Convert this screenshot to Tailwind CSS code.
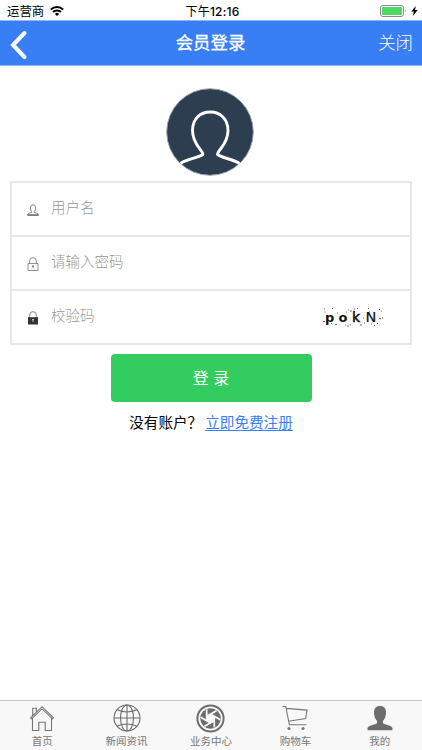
<!DOCTYPE html>
<html lang="zh-CN">
<head>
<meta charset="utf-8">
<meta name="viewport" content="width=device-width, initial-scale=1">
<title>会员登录</title>
<script src="https://cdn.jsdelivr.net/npm/@tailwindcss/browser@4"></script>
</head>
<body class="bg-white">
<div class="w-[422px] h-[750px] flex flex-col overflow-hidden bg-white font-['Inter','Noto_Sans_CJK_SC',sans-serif] text-black">
  <!-- status bar -->
  <div class="h-[20px] shrink-0 grid grid-cols-3 items-center pl-[7px] pr-[4px] text-[12px] leading-[20px]">
    <div class="flex items-center gap-[6px] pt-[2px]">
      <span class="text-[12.400px]">运营商</span>
      <svg class="w-[14px] h-[10px] -mt-[2px]" viewBox="0 0 14 10" fill="none" stroke="#000" stroke-width="2"><path d="M.8 3.600a9 9 0 0 1 12.400 0M3.100 6a5.600 5.600 0 0 1 7.800 0"/><path d="M7 10L4.900 7.900a3 3 0 0 1 4.200 0z" fill="#000" stroke="none"/></svg>
    </div>
    <div class="text-center font-medium pt-[2px] whitespace-nowrap tracking-[.2px]"><span class="font-normal">下午</span>12:16</div>
    <div class="flex justify-end items-center gap-[4px]">
      <svg class="w-[27px] h-[12px]" viewBox="0 0 27 12"><rect x=".5" y=".5" width="23" height="11" rx="2.500" fill="#fff" stroke="#8b8b8b"/><rect x="2" y="2" width="20" height="8" rx="1" fill="#4cd964"/><path d="M25 4q1.600 2 0 4z" fill="#8b8b8b"/></svg>
      <svg class="w-[7px] h-[10px]" viewBox="0 0 7 10"><path d="M4.800 0L.3 5.600h2.500L1.800 10l4.900-5.900H4z"/></svg>
    </div>
  </div>
  <!-- title bar -->
  <header class="h-[46px] shrink-0 bg-[#387ef5] border-y border-[#8fb9fb] grid grid-cols-3 items-center text-white">
    <svg class="w-[18px] h-[30px] ml-[10px] mt-[3px]" viewBox="0 0 18 30" fill="none" stroke="#fff" stroke-width="4" stroke-linecap="round"><path d="M14.500 3L3 15l11.500 12"/></svg>
    <h1 class="text-center text-[17.400px] font-normal leading-[24px] pr-[1px] [-webkit-text-stroke:.3px_white]">会员登录</h1>
    <a class="text-right text-[17.400px] font-light leading-[24px] pr-[9px]">关闭</a>
  </header>
  <!-- login form -->
  <main class="flex-1 flex flex-col items-center pt-[22px]">
    <svg class="w-[88px] h-[88px] shrink-0 mr-[2px]" viewBox="0 0 88 88"><circle cx="44" cy="44" r="43.300" fill="#2d3e50" stroke="#9aa4ae" stroke-width="1"/><path d="M14.500 75.500C22 70.500 31 70.500 36.800 66.500C37.500 62.500 26.500 57 26.500 42.500C26.500 31 34 24 44.200 24S62 31 62 42.500C62 57 51 62.500 51.500 66.500C57 70.500 66 70.500 73.500 75.500" fill="none" stroke="#fff" stroke-width="2.900" stroke-linejoin="round"/></svg>
    <form class="mt-[5px] w-[402px] h-[164px] shrink-0 border-2 border-[#e7e7e7] flex flex-col text-[14.500px] font-light text-[#999]">
      <label class="h-[54px] border-b-2 border-[#e7e7e7] flex items-center pl-[15px] pb-[2px] gap-[12px]">
        <svg class="w-[12px] h-[12px] mt-[3px]" viewBox="0 0 12 12" fill="none" stroke="#777" stroke-width=".9"><path d="M4.600 7.400C3.800 6.600 3.400 5.400 3.400 4C3.400 1.900 4.300.8 6 .8s2.600 1.100 2.600 3.200c0 1.400-.4 2.600-1.200 3.400v1.100c1.800.5 3.800.7 4 2.500H.6c.2-1.800 2.200-2 4-2.500z"/><path d="M.4 11.100h11.200" stroke="#444"/></svg>
        <span>用户名</span>
      </label>
      <label class="h-[54px] border-b-2 border-[#e7e7e7] flex items-center pl-[15px] pb-[2px] gap-[12px]">
        <svg class="w-[12px] h-[14px] mt-[3px]" viewBox="0 0 12 14" fill="none" stroke="#858585" stroke-width=".9"><path d="M1 6.500h10v7H1zM2.700 6.500V4a3.300 3.300 0 0 1 6.600 0v2.500"/><path d="M5 8.500h2L6 11.500z" fill="#555" stroke="none"/></svg>
        <span>请输入密码</span>
      </label>
      <label class="h-[52px] flex items-center pl-[15px] pb-[2px] gap-[12px]">
        <svg class="w-[12px] h-[14px] mt-[4px]" viewBox="0 0 12 14"><path d="M2.700 7V4a3.300 3.300 0 0 1 6.600 0v3" fill="none" stroke="#777" stroke-width=".9"/><path d="M1 6.200h10v7.300H1z" fill="#333"/><path d="M5 8h2l-.6 1.500v1.500h-.8V9.500z" fill="#ddd"/></svg>
        <span>校验码</span>
        <svg class="ml-auto mr-[24px] mt-[2px] w-[64px] h-[24px]" viewBox="0 0 64 24" fill="#111">
          <g class="font-['DejaVu_Sans'] font-bold text-[13px]"><text x="3" y="17">p</text><text x="16.500" y="17">o</text><text x="30" y="17" class="font-normal text-[14px]" stroke="#111" stroke-width=".5">k</text><text x="43.500" y="17" class="font-normal text-[14.500px]" stroke="#111" stroke-width=".2">N</text></g>
          <path d="M2 4h1M10 3.500h1M2.500 7h1M1 16.500h2M9 18.500h1M13 19.500h2M15 8h1M24 7h1M26 5h1M28 6h2M32 4h1M35 3.500h1M23 20h1M25 21h2M28 20h1M38 20h2M46 3.500h1M47 7h1M57 4.500h1M59 6h1M49 19h1M52 20.500h1M55 18.500h1M57 13.500h2M60 13h1M41 13h1M42 18h1" stroke="#333" stroke-width="1" opacity=".7"/>
        </svg>
      </label>
    </form>
    <button type="button" class="mt-[9px] w-[201px] h-[48px] shrink-0 rounded-[4px] bg-[#33cd5f] text-white text-[16px] leading-[48px]">登 录</button>
    <p class="mt-[10px] flex gap-[3px] text-[14.600px] leading-[22px] whitespace-nowrap"><span>没有账户？</span><a class="text-[#387ef5] underline underline-offset-2 decoration-1">立即免费注册</a></p>
  </main>
  <!-- tab bar -->
  <nav class="h-[50px] shrink-0 bg-[#f8f8f8] border-t border-[#c4c4c4] grid grid-cols-5 text-[10.500px] leading-[14px] text-[#777]">
    <a class="flex flex-col items-center pt-[3px] gap-[3px]">
      <svg class="w-[28px] h-[28px]" viewBox="0 0 28 28" fill="none" stroke="#777" stroke-width="1.100"><path d="M2.500 13.800L14 2.700l11.500 11.100-1 1L14 4.900 3.500 14.800zM4.500 14v12.500h6.300v-8.300h6.400v8.300h6.300V14M4.700 11.500V4.300h3.600v3.800"/></svg>
      <span>首页</span>
    </a>
    <a class="flex flex-col items-center pt-[3px] gap-[3px]">
      <svg class="w-[28px] h-[28px]" viewBox="0 0 28 28" fill="none" stroke="#6d6d6d" stroke-width="1.100"><circle cx="14" cy="14" r="13"/><ellipse cx="14" cy="14" rx="6.500" ry="13"/><path d="M14 1v26M1 14h26M4 5.800q10 4.400 20 0M4 22.200q10-4.400 20 0"/></svg>
      <span>新闻资讯</span>
    </a>
    <a class="flex flex-col items-center pt-[3px] gap-[2px]">
      <svg class="w-[29px] h-[29px]" viewBox="-14.500 -14.500 29 29">
        <circle r="13.100" fill="none" stroke="#6d6d6d" stroke-width="2"/><circle r="10.300" fill="#6d6d6d"/>
        <path d="M0-4.400l3.810 2.200v4.400L0 4.400l-3.810-2.200v-4.400z" fill="#f8f8f8"/>
        <g stroke="#f8f8f8" stroke-width="1.700"><path id="slit" d="M0-4.400L9.800 1.260"/><use href="#slit" transform="rotate(60)"/><use href="#slit" transform="rotate(120)"/><use href="#slit" transform="rotate(180)"/><use href="#slit" transform="rotate(240)"/><use href="#slit" transform="rotate(300)"/></g>
      </svg>
      <span>业务中心</span>
    </a>
    <a class="flex flex-col items-center pt-[3px] gap-[3px]">
      <svg class="w-[28px] h-[28px]" viewBox="0 0 28 28" fill="none" stroke="#777" stroke-width="1.100"><path d="M1.500 2.500h3.200l3.700 18.300h17M5.200 4.400L26 6.100l-1.300 8.400L7.300 17.200"/><circle cx="8" cy="24.500" r="1.600" fill="#777" stroke="none"/><circle cx="22" cy="24.500" r="1.600" fill="#777" stroke="none"/></svg>
      <span>购物车</span>
    </a>
    <a class="flex flex-col items-center pt-[3px] gap-[3px]">
      <svg class="w-[28px] h-[28px]" viewBox="0 0 28 28" fill="#6d6d6d"><path d="M14 2c4 0 6 2.300 6 6.300 0 3.700-1.100 6.600-3 8.700v2.300c3.800 1.900 9.500 2.400 9.500 5.200v1.800h-25v-1.800c0-2.800 5.700-3.300 9.500-5.200v-2.300c-1.900-2.100-3-5-3-8.700 0-4 2-6.300 6-6.300z"/></svg>
      <span>我的</span>
    </a>
  </nav>
</div>
</body>
</html>
